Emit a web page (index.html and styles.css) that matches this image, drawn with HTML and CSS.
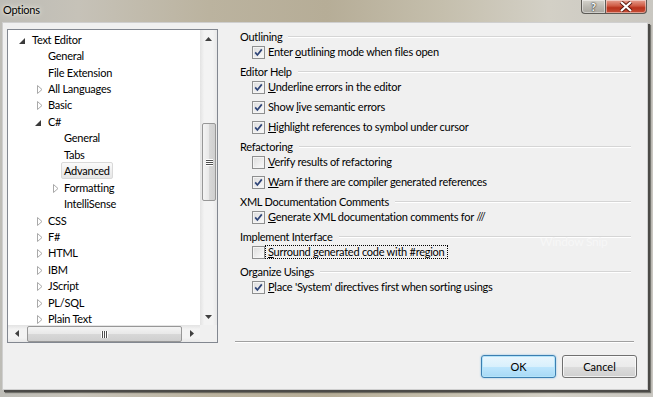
FILE: index.html
```html
<!DOCTYPE html>
<html lang="en">
  <head>
    <meta charset="UTF-8" />
    <title>Options</title>
    <link rel="stylesheet" href="styles.css">
  </head>
  <body>
    <svg class="defs" width="0" height="0">
      <symbol id="tri-open" viewBox="0 0 6 6"><path d="M6 0 L6 6 L0 6 Z" fill="#3a3a3a"/></symbol>
      <symbol id="tri-closed" viewBox="0 0 6 9"><path d="M0.5 0.5 L5 4.5 L0.5 8.5 Z" fill="#fff" stroke="#a9a9a9"/></symbol>
      <symbol id="tick" viewBox="0 0 11 11"><path d="M2.2 5.4 L4.4 8 L8.8 2.4" fill="none" stroke="#2f4578" stroke-width="1.7"/></symbol>
    </svg>

    <div class="window">
      <div class="titlebar">
        <span class="title">Options</span>
        <div class="caption-btns">
          <span class="cap-help">?</span>
          <span class="cap-close">
            <svg width="14" height="11" viewBox="0 0 14 11">
              <path d="M2 1 L12 10 M12 1 L2 10" stroke="#5a1a10" stroke-width="4"/>
              <path d="M2 1 L12 10 M12 1 L2 10" stroke="#fff" stroke-width="2.2"/>
            </svg>
          </span>
        </div>
      </div>

      <div class="client">
        <div class="main">
          <div class="tree-box">
            <div class="tree-top">
              <ul class="tree">
                <li class="lvl0"><i class="tw"><svg class="open"><use href="#tri-open"/></svg></i><span>Text Editor</span></li>
                <li class="lvl1"><i class="tw"></i><span>General</span></li>
                <li class="lvl1"><i class="tw"></i><span>File Extension</span></li>
                <li class="lvl1"><i class="tw"><svg class="closed"><use href="#tri-closed"/></svg></i><span>All Languages</span></li>
                <li class="lvl1"><i class="tw"><svg class="closed"><use href="#tri-closed"/></svg></i><span>Basic</span></li>
                <li class="lvl1"><i class="tw"><svg class="open"><use href="#tri-open"/></svg></i><span>C#</span></li>
                <li class="lvl2"><i class="tw"></i><span>General</span></li>
                <li class="lvl2"><i class="tw"></i><span>Tabs</span></li>
                <li class="lvl2"><i class="tw"></i><span class="sel">Advanced</span></li>
                <li class="lvl2"><i class="tw"><svg class="closed"><use href="#tri-closed"/></svg></i><span>Formatting</span></li>
                <li class="lvl2"><i class="tw"></i><span>IntelliSense</span></li>
                <li class="lvl1"><i class="tw"><svg class="closed"><use href="#tri-closed"/></svg></i><span>CSS</span></li>
                <li class="lvl1"><i class="tw"><svg class="closed"><use href="#tri-closed"/></svg></i><span>F#</span></li>
                <li class="lvl1"><i class="tw"><svg class="closed"><use href="#tri-closed"/></svg></i><span>HTML</span></li>
                <li class="lvl1"><i class="tw"><svg class="closed"><use href="#tri-closed"/></svg></i><span>IBM</span></li>
                <li class="lvl1"><i class="tw"><svg class="closed"><use href="#tri-closed"/></svg></i><span>JScript</span></li>
                <li class="lvl1"><i class="tw"><svg class="closed"><use href="#tri-closed"/></svg></i><span>PL/SQL</span></li>
                <li class="lvl1"><i class="tw"><svg class="closed"><use href="#tri-closed"/></svg></i><span>Plain Text</span></li>
              </ul>
              <div class="vscroll">
                <div class="sb-btn"><svg width="7" height="4"><path d="M3.5 0 L7 4 L0 4 Z" fill="#404040"/></svg></div>
                <div class="vtrack">
                  <div class="vthumb"><span class="grip-v"></span></div>
                </div>
                <div class="sb-btn"><svg width="7" height="4"><path d="M0 0 L7 0 L3.5 4 Z" fill="#404040"/></svg></div>
              </div>
            </div>
            <div class="hscroll">
              <div class="sb-btn"><svg width="4" height="7"><path d="M4 0 L4 7 L0 3.5 Z" fill="#404040"/></svg></div>
              <div class="htrack">
                <div class="hthumb"><span class="grip-h"></span></div>
              </div>
              <div class="sb-btn"><svg width="4" height="7"><path d="M0 0 L4 3.5 L0 7 Z" fill="#404040"/></svg></div>
              <div class="sb-corner"></div>
            </div>
          </div>

          <div class="settings">
            <div class="group-title">Outlining</div>
            <div class="check"><span class="cb on"><svg><use href="#tick"/></svg></span><label>Enter <u>o</u>utlining mode when files open</label></div>

            <div class="group-title">Editor Help</div>
            <div class="check"><span class="cb on"><svg><use href="#tick"/></svg></span><label><u>U</u>nderline errors in the editor</label></div>
            <div class="check"><span class="cb on"><svg><use href="#tick"/></svg></span><label>Show <u>l</u>ive semantic errors</label></div>
            <div class="check"><span class="cb on"><svg><use href="#tick"/></svg></span><label><u>H</u>ighlight references to symbol under cursor</label></div>

            <div class="group-title">Refactoring</div>
            <div class="check"><span class="cb"></span><label><u>V</u>erify results of refactoring</label></div>
            <div class="check"><span class="cb on"><svg><use href="#tick"/></svg></span><label><u>W</u>arn if there are compiler generated references</label></div>

            <div class="group-title">XML Documentation Comments</div>
            <div class="check"><span class="cb on"><svg><use href="#tick"/></svg></span><label><u>G</u>enerate XML documentation comments for ///</label></div>

            <div class="group-title">Implement Interface</div>
            <div class="check"><span class="cb"></span><label class="focus"><u>S</u>urround generated code with #region</label></div>

            <div class="group-title">Organize Usings</div>
            <div class="check"><span class="cb on"><svg><use href="#tick"/></svg></span><label><u>P</u>lace 'System' directives first when sorting usings</label></div>

            <div class="spacer"></div>
            <div class="sep"></div>
            <span class="watermark">Window Snip</span>
          </div>
        </div>

        <div class="footer">
          <button class="btn btn-default">OK</button>
          <button class="btn">Cancel</button>
        </div>
      </div>
    </div>
  </body>
</html>
```

FILE: styles.css
```css
html,
body {
  margin: 0;
  padding: 0;
}

body {
  width: 653px;
  height: 397px;
  overflow: hidden;
  font-family: Lato, "Open Sans", sans-serif;
  font-size: 11px;
  letter-spacing: -0.25px;
  color: #000;
}

.defs {
  position: absolute;
}

.window {
  width: 653px;
  height: 397px;
  box-sizing: border-box;
  padding: 0 5px 7px 2px;
  display: flex;
  flex-direction: column;
  background: linear-gradient(90deg, #bdbcb6 0%, #c6c2b8 12%, #bbb39f 32%, #b6ad97 50%, #c5bfad 68%, #d3d0c6 84%, #c9c7c1 100%);
}

/* title bar */
.titlebar {
  height: 22px;
  flex: none;
  display: flex;
  justify-content: space-between;
  align-items: flex-start;
}

.title {
  margin: 3px 0 0 1px;
  color: #000;
  text-shadow: 0 0 6px #f2efe6, 0 0 3px #f2efe6;
}

.caption-btns {
  display: flex;
  margin-right: 1px;
}

.cap-help,
.cap-close {
  height: 13px;
  display: flex;
  align-items: center;
  justify-content: center;
  border: 1px solid #5c5a55;
  border-top: none;
  box-shadow: inset 0 0 0 1px rgba(255, 255, 255, 0.45);
}

.cap-help {
  width: 23px;
  border-right: none;
  border-radius: 0 0 0 4px;
  background: linear-gradient(#d5d3cc, #b9b7b0 55%, #a9a7a0);
  color: #fff;
  font-weight: bold;
  font-size: 11px;
  line-height: 13px;
  text-shadow: 0 0 2px #333, 0 0 1px #000;
}

.cap-close {
  width: 40px;
  border-radius: 0 0 4px 0;
  background: linear-gradient(#e6a090, #cf5c45 45%, #b8321c 60%, #c85038);
}

/* client area */
.client {
  flex: 1;
  display: flex;
  flex-direction: column;
  background-color: #f0f0f0;
  border: 1px solid #cfcfcf;
  box-shadow: 2px 2px 0 #4b4a47, 3px 3px 1px rgba(60, 60, 55, 0.6);
}

.main {
  display: flex;
  padding: 6px 0 0 4px;
}

/* tree view */
.tree-box {
  width: 211px;
  height: 314px;
  box-sizing: border-box;
  border: 1px solid #828790;
  background-color: #fff;
  display: flex;
  flex-direction: column;
}

.tree-top {
  flex: 1;
  display: flex;
  min-height: 0;
}

.tree {
  flex: 1;
  list-style: none;
  margin: 0;
  padding: 1px 0 0 0;
  overflow: hidden;
}

.tree li {
  height: 16.45px;
  display: flex;
  align-items: center;
  white-space: nowrap;
}

.tree .lvl0 {
  padding-left: 10px;
}

.tree .lvl1 {
  padding-left: 26px;
}

.tree .lvl2 {
  padding-left: 42px;
}

.tw {
  width: 14px;
  height: 16px;
  flex: none;
  display: flex;
  align-items: center;
}

.tw .open {
  width: 6px;
  height: 6px;
  margin: 3px 0 0 1px;
}

.tw .closed {
  width: 6px;
  height: 9px;
  margin: 2px 0 0 3px;
}

.tree li span {
  margin-left: -3px;
  padding: 0 2px;
  line-height: 15px;
  border: 1px solid transparent;
  border-radius: 2px;
}

.tree li span.sel {
  border-color: #d9d9d9;
  background: linear-gradient(#fafafa, #e6e6e6);
}

/* scroll bars */
.vscroll {
  width: 17px;
  flex: none;
  display: flex;
  flex-direction: column;
  background: linear-gradient(90deg, #e3e3e3, #f3f3f3 25%, #f3f3f3 75%, #e8e8e8);
}

.sb-btn {
  width: 17px;
  height: 17px;
  flex: none;
  display: flex;
  align-items: center;
  justify-content: center;
}

.vtrack {
  flex: 1;
}

.vthumb {
  margin: 76px 1px 0 2px;
  height: 78px;
  box-sizing: border-box;
  border: 1px solid #979797;
  border-radius: 2px;
  background: linear-gradient(90deg, #f4f4f4, #e8e8e8 50%, #d8d8d8 51%, #cfcfcf);
  display: flex;
  align-items: center;
  justify-content: center;
}

.grip-v {
  width: 7px;
  height: 7px;
  background: repeating-linear-gradient(#fff 0, #fff 1px, #4e4e4e 1px, #4e4e4e 2px);
}

.hscroll {
  height: 17px;
  flex: none;
  display: flex;
  background: linear-gradient(#e3e3e3, #f3f3f3 25%, #f3f3f3 75%, #e8e8e8);
}

.htrack {
  flex: 1;
  display: flex;
  align-items: stretch;
  padding: 1px 1px 0 2px;
}

.hthumb {
  flex: 1;
  box-sizing: border-box;
  border: 1px solid #979797;
  border-radius: 2px;
  background: linear-gradient(#f4f4f4, #e8e8e8 50%, #d8d8d8 51%, #cfcfcf);
  display: flex;
  align-items: center;
  justify-content: center;
}

.grip-h {
  width: 7px;
  height: 7px;
  background: repeating-linear-gradient(90deg, #fff 0, #fff 1px, #4e4e4e 1px, #4e4e4e 2px);
}

.sb-corner {
  width: 17px;
  background-color: #f0f0f0;
}

/* settings */
.settings {
  position: relative;
  width: 399px;
  margin-left: 17px;
  padding-top: 1px;
  display: flex;
  flex-direction: column;
}

.group-title {
  height: 12px;
  margin: 0 3px 0 5px;
  display: flex;
  align-items: center;
  gap: 6px;
  white-space: nowrap;
}

.group-title::after {
  content: "";
  flex: 1;
  height: 0;
  border-top: 1px solid #d5d5d5;
  border-bottom: 1px solid #fff;
  margin-top: 1px;
}

.check {
  height: 20px;
  display: flex;
  align-items: center;
  padding-left: 17px;
}

.check + .group-title {
  margin-top: 3px;
}

.cb {
  width: 13px;
  height: 13px;
  box-sizing: border-box;
  flex: none;
  border: 1px solid #8e8f8f;
  background: linear-gradient(135deg, #dcdcdc, #fbfbfb);
  box-shadow: inset 0 0 0 1px #f4f4f4;
  display: flex;
}

.cb svg {
  width: 11px;
  height: 11px;
}

.check label {
  padding: 0 2px;
  line-height: 12px;
  border: 1px dotted transparent;
  white-space: nowrap;
}

.check label.focus {
  border-color: #000;
}

.spacer {
  flex: 1;
}

.sep {
  height: 0;
  border-top: 1px solid #a0a0a0;
  border-bottom: 1px solid #fff;
}

.watermark {
  position: absolute;
  left: 305px;
  top: 205px;
  color: #f7f7f7;
  font-size: 12px;
}

/* buttons */
.footer {
  display: flex;
  justify-content: flex-end;
  gap: 6px;
  padding: 12px 10px 0 0;
}

.btn {
  width: 75px;
  height: 23px;
  padding: 0;
  font-family: Lato, "Open Sans", sans-serif;
  font-size: 11px;
  color: #000;
  border: 1px solid #707070;
  border-radius: 3px;
  background: linear-gradient(#f2f2f2, #ebebeb 50%, #dddddd 51%, #cfcfcf);
  box-shadow: inset 0 0 0 1px rgba(255, 255, 255, 0.7);
}

.btn-default {
  border-color: #3c7fb1;
  background: linear-gradient(#eaf6fd, #d9f0fc 50%, #bee6fd 51%, #a7d9f5);
  box-shadow: inset 0 0 0 1px #b4e4fa, 0 0 2px #7ab8e0;
}
```
